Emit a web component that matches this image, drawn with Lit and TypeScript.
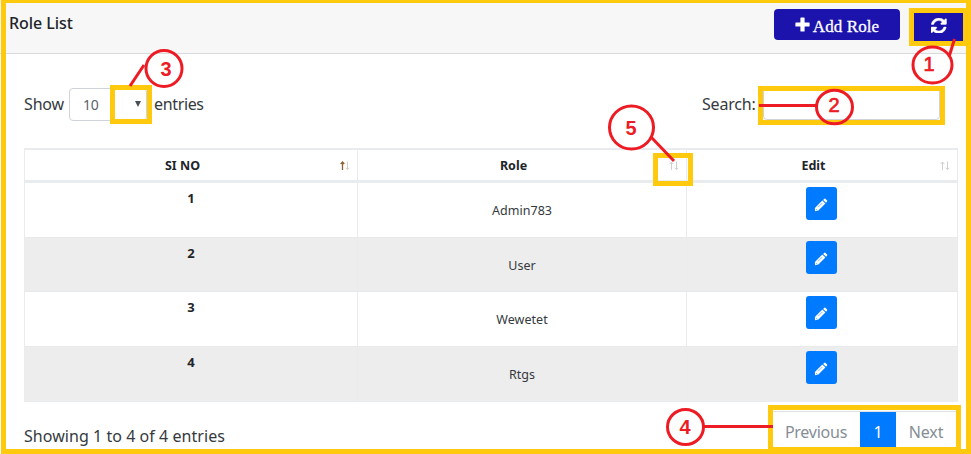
import { LitElement, html, css, svg } from "lit";
import { customElement, property } from "lit/decorators.js";

@customElement("sort-arrows")
class SortArrows extends LitElement {
  @property({ type: Boolean }) active = false;
  static styles = css`
    :host { display: block; width: 10px; height: 10px; }
    svg { display: block; }
    .arrow { fill: none; stroke: #cfcfcf; stroke-width: 1; }
    .on { stroke: #8d6335; stroke-width: 1.3; }
  `;
  render() {
    return html`<svg width="10" height="10" viewBox="0 0 10 10">
      <path class="arrow ${this.active ? "on" : ""}" d="M2.5 9V1M0.7 3L2.5 1L4.3 3" />
      <path class="arrow" d="M7.500 0.5V8.5M5.700 6.8L7.500 8.7L9.300 6.8" />
    </svg>`;
  }
}

@customElement("app-root")
class AppRoot extends LitElement {
  private rows = ["Admin783", "User", "Wewetet", "Rtgs"];

  private notes = [
    { n: 1, x: 932.5, y: 65, rx: 19.5, ry: 18, tx: 929, ty: 71, line: "M949 57L954.5 39", thin: true },
    { n: 2, x: 834.5, y: 107, rx: 18, ry: 16.8, tx: 834, ty: 112, line: "M759 105.5H817", thin: true },
    { n: 3, x: 164, y: 68.5, rx: 18, ry: 18, tx: 166, ty: 76, line: "M130 86L144 65", thin: false },
    { n: 4, x: 685.5, y: 427, rx: 18, ry: 17.5, tx: 685, ty: 434, line: "M702 426.5H773", thin: false },
    { n: 5, x: 631.5, y: 127.5, rx: 22, ry: 21.5, tx: 631, ty: 135, line: "M651 137L674 161", thin: false },
  ];

  static styles = css`
    :host { display: block; font-family: "Noto Sans", "Open Sans", sans-serif; color: #343a40; }
    * { box-sizing: border-box; }
    .page { position: relative; width: 971px; height: 454px; overflow: hidden; background: #fff; display: flex; flex-direction: column; }
    header { height: 54px; flex: none; display: flex; align-items: flex-start; background: #f7f7f7; border-bottom: 1px solid #d9dadb; padding: 0 8px 0 9px; }
    h1 { margin: 11px auto 0 0; font-size: 16px; line-height: 24px; font-weight: 500; letter-spacing: -0.05px; white-space: nowrap; color: #212529; }
    button { border: 0; padding: 0; color: #fff; display: flex; align-items: center; justify-content: center; }
    .add { width: 126px; height: 31px; margin: 9px 14px 0 0; border-radius: 4px; background: #1b13ab; font: 17px/31px "Liberation Serif", serif; gap: 3px; padding: 4px 0 0 0; }
    .add svg { margin-top: -5px; }
    .add span { letter-spacing: 0.1px; -webkit-text-stroke: 0.3px #fff; }
    .refresh { width: 49px; height: 28px; margin-top: 13px; background: #1b13ab; }
    .refresh svg { margin: -3px 0 0 1px; }
    .controls { height: 94px; flex: none; display: flex; align-items: flex-start; padding: 34px 31px 0 24px; line-height: 32px; font-size: 16px; }
    .show { letter-spacing: -0.15px; width: 45px; }
    .select { width: 78px; height: 33px; border: 1px solid #ced4da; border-radius: 4px; display: flex; align-items: center; justify-content: space-between; padding: 1px 5px 0 13px; font-size: 14px; letter-spacing: -0.3px; color: #5c636a; }
    .caret { border: 3px solid transparent; border-top: 6px solid #495057; border-bottom: 0; margin-top: -2px; }
    .entries { margin-left: 7px; letter-spacing: -0.35px; }
    .search { margin-left: auto; width: 61px; letter-spacing: -0.2px; }
    .field { width: 177px; height: 32px; border: 1px solid #ced4da; border-radius: 4px; }
    .table { flex: none; margin: 0 13px 0 24px; border: 1px solid #e9ecef; border-top-width: 2px; color: #212529; }
    .row { display: grid; grid-template-columns: 332px 329px 1fr; height: 55px; border-top: 1px solid #e7eaed; }
    .row:nth-child(2) { border-top: 0; height: 54px; }
    .row:nth-child(3) { height: 54px; }
    .row > * + * { border-left: 1px solid #e9ecef; }
    .row:nth-child(odd) { background: #ededed; }
    .head { height: 33px; border-top: 0; border-bottom: 3px solid #e9ecef; font-size: 12.5px; font-weight: 700; }
    .row.head { background: #fff; }
    .head > div { display: grid; grid-template-columns: 1fr 10px; align-items: center; padding: 0 7px 0 0; text-align: center; }
    .head sort-arrows { margin-top: 2px; }
    .num { text-align: center; font-size: 13px; line-height: 20px; font-weight: 700; padding-top: 5px; }
    .name { text-align: center; font-size: 12.5px; line-height: 20px; padding-top: 18px; letter-spacing: 0.05px; color: #343a40; }
    .act { display: flex; justify-content: center; align-items: flex-start; padding: 4px 2px 0 0; }
    .row:nth-child(3) .act { padding-top: 3px; }
    .edit { width: 31px; height: 32.5px; border-radius: 3px; background: #007bff; padding-top: 3px; }
    footer { display: flex; align-items: flex-start; padding: 9px 15px 0 24px; font-size: 16px; }
    .info { margin: 13px auto 0 0; line-height: 24px; letter-spacing: 0.05px; }
    .pager { display: flex; border-top: 1px solid #dee2e6; height: 38px; line-height: 40px; color: #868e96; text-align: center; }
    .prev { width: 87px; letter-spacing: -0.25px; padding-right: 1px; }
    .cur { width: 36px; background: #007bff; color: #fff; }
    .next { width: 60px; letter-spacing: -0.1px; }
    .overlay { position: absolute; left: 0; top: 0; }
    .mark { fill: none; stroke: #ffc90e; stroke-width: 5; }
    .top { stroke-width: 3; }
    .red { fill: none; stroke: #ed1c24; stroke-width: 3; }
    .digit { fill: #ed1c24; font: bold 20px "Liberation Sans", sans-serif; text-anchor: middle; }
    .thin { font-weight: 400; stroke: #ed1c24; stroke-width: 0.7; }
  `;

  render() {
    return html`<div class="page">
      <header>
        <h1>Role List</h1>
        <button class="add">
          <svg width="15" height="15" viewBox="0 0 15 15"><path fill="#fff" d="M6 .5h3q.6 0 .6.6v4.3H14q.6 0 .6.6v3q0 .6-.6.6H9.6V14q0 .6-.6.6H6q-.6 0-.6-.6V9.6H1q-.6 0-.6-.6V6q0-.6.6-.6h4.4V1.1q0-.6.6-.6z"/></svg>
          <span>Add Role</span>
        </button>
        <button class="refresh" aria-label="Refresh">
          <svg width="15.500" height="15.500" viewBox="0 0 1536 1536"><path fill="#fff" stroke="#fff" stroke-width="40" d="M1511 928q0 5-1 7-64 268-268 434.500T764 1536q-146 0-282.500-55T238 1324l-129 129q-19 19-45 19t-45-19-19-45V960q0-26 19-45t45-19h448q26 0 45 19t19 45-19 45l-137 137q71 66 161 102t187 36q134 0 250-65t186-179q11-17 53-117 8-23 30-23h192q13 0 22.500 9.500t9.500 22.500zm25-800v448q0 26-19 45t-45 19h-448q-26 0-45-19t-19-45 19-45l138-138Q969 256 768 256q-134 0-250 65T332 500q-11 17-53 117-8 23-30 23H50q-13 0-22.500-9.500T18 608v-7q65-268 270-434.500T768 0q146 0 284 55.500T1297 212l130-129q19-19 45-19t45 19 19 45z"/></svg>
        </button>
      </header>
      <div class="controls">
        <span class="show">Show</span>
        <div class="select"><span>10</span><i class="caret"></i></div>
        <span class="entries">entries</span>
        <span class="search">Search:</span>
        <div class="field"></div>
      </div>
      <div class="table">
        <div class="row head">
          <div><span>SI NO</span><sort-arrows active></sort-arrows></div>
          <div><span>Role</span><sort-arrows></sort-arrows></div>
          <div><span>Edit</span><sort-arrows></sort-arrows></div>
        </div>
        ${this.rows.map((r, i) => html`<div class="row">
          <div class="num">${i + 1}</div>
          <div class="name">${r}</div>
          <div class="act"><button class="edit" aria-label="Edit">
            <svg width="14" height="14" viewBox="0 0 14 14"><path fill="#fff" d="M8.300 2.600L11.400 5.500L4.400 12.600L1 13.300L.9 9.900zM9.100 1.900L10.400.7Q10.900.4 11.300.8L13.100 2.500Q13.500 3 13.100 3.500L12.100 4.700z"/><path d="M1.800 10.900L3.300 12.300M4 9.300L8.300 5" fill="none" stroke="#007bff" stroke-width=".5"/></svg>
          </button></div>
        </div>`)}
      </div>
      <footer>
        <span class="info">Showing 1 to 4 of 4 entries</span>
        <div class="pager"><span class="prev">Previous</span><span class="cur">1</span><span class="next">Next</span></div>
      </footer>
      <svg class="overlay" width="971" height="454" viewBox="0 0 971 454">
        <g class="mark">
          <path class="top" d="M0.900 1.500H971"/>
          <path d="M3.500 0V451.500H968.500V0"/>
          <rect x="911.500" y="10.500" width="54" height="33"/>
          <rect x="760.500" y="88.500" width="182" height="34"/>
          <rect x="112.500" y="87.500" width="37" height="34"/>
          <rect x="655.500" y="155.500" width="35" height="28"/>
          <rect x="770.500" y="407.500" width="188" height="42"/>
        </g>
        ${this.notes.map((a) => svg`<g>
          <ellipse class="red" cx=${a.x} cy=${a.y} rx=${a.rx} ry=${a.ry}></ellipse>
          <path class="red" d=${a.line}></path>
          <text class="digit ${a.thin ? "thin" : ""}" x=${a.tx} y=${a.ty}>${a.n}</text>
        </g>`)}
      </svg>
    </div>`;
  }
}
